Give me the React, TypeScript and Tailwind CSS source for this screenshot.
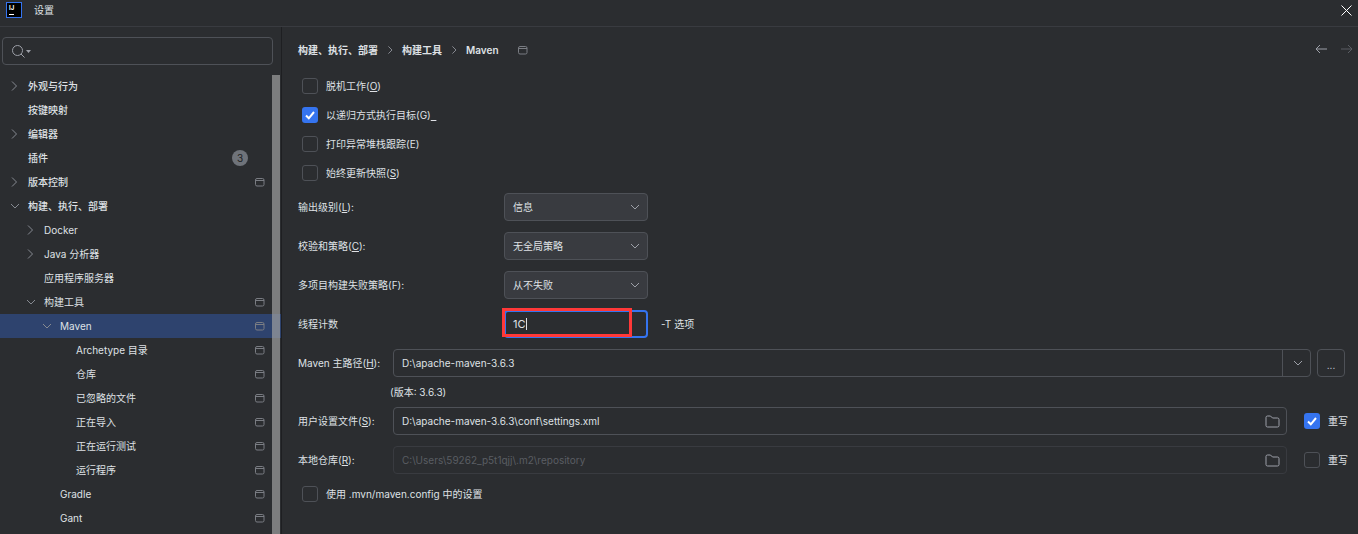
import { ReactNode } from "react";

interface TreeItem {
  label: string;
  level: number;
  arrow?: "right" | "down";
  project?: boolean;
  badge?: string;
  selected?: boolean;
  strong?: boolean;
}

const treeItems: TreeItem[] = [
  { label: "外观与行为", level: 0, arrow: "right", strong: true },
  { label: "按键映射", level: 0, strong: true },
  { label: "编辑器", level: 0, arrow: "right", strong: true },
  { label: "插件", level: 0, badge: "3", strong: true },
  { label: "版本控制", level: 0, arrow: "right", project: true, strong: true },
  { label: "构建、执行、部署", level: 0, arrow: "down", strong: true },
  { label: "Docker", level: 1, arrow: "right" },
  { label: "Java 分析器", level: 1, arrow: "right" },
  { label: "应用程序服务器", level: 1 },
  { label: "构建工具", level: 1, arrow: "down", project: true },
  { label: "Maven", level: 2, arrow: "down", project: true, selected: true },
  { label: "Archetype 目录", level: 3, project: true },
  { label: "仓库", level: 3, project: true },
  { label: "已忽略的文件", level: 3, project: true },
  { label: "正在导入", level: 3, project: true },
  { label: "正在运行测试", level: 3, project: true },
  { label: "运行程序", level: 3, project: true },
  { label: "Gradle", level: 2, project: true },
  { label: "Gant", level: 2, project: true },
];

function Chevron({ dir, className }: { dir: "right" | "down"; className?: string }) {
  return (
    <svg width="10" height="10" viewBox="0 0 10 10" fill="none" stroke="currentColor" strokeWidth="1" className={className}>
      {dir === "right" ? <path d="M3 0.5l4.5 4.5-4.5 4.5" /> : <path d="M2 3l4 4 4-4" />}
    </svg>
  );
}

function ProjectIcon() {
  return (
    <svg width="10" height="9" viewBox="0 0 10 9" fill="none" stroke="#7a7d83" strokeWidth="1">
      <rect x="0.5" y="0.5" width="8.5" height="7.5" rx="1.5" />
      <path d="M0.5 2.5h8.5" />
    </svg>
  );
}

function FolderIcon() {
  return (
    <svg width="15" height="13" viewBox="0 0 15 13" fill="none" stroke="#9da0a8" strokeWidth="1">
      <path d="M1 2.5A1.5 1.5 0 0 1 2.5 1h3l2 2h5A1.5 1.5 0 0 1 14 4.5v6a1.5 1.5 0 0 1-1.5 1.5h-10A1.5 1.5 0 0 1 1 10.5z" />
    </svg>
  );
}

function CheckBox({ checked }: { checked?: boolean }) {
  if (checked) {
    return (
      <span className="w-4 h-4 shrink-0 rounded-[3px] bg-[#3574f0] flex items-center justify-center">
        <svg width="12" height="12" viewBox="0 0 12 12" fill="none" stroke="#ffffff" strokeWidth="2">
          <path d="M2 6.5l2.8 2.8L10 3" />
        </svg>
      </span>
    );
  }
  return <span className="w-4 h-4 shrink-0 rounded-[3px] border border-[#4e5157]" />;
}

function CheckRow({ checked, children }: { checked?: boolean; children: ReactNode }) {
  return (
    <div className="h-[29px] flex items-center gap-2 pl-1">
      <CheckBox checked={checked} />
      <span className="text-[#dfe1e5]">{children}</span>
    </div>
  );
}

function Select({ label, value }: { label: ReactNode; value: string }) {
  return (
    <div className="h-7 flex items-center">
      <span className="w-[206px] text-[#dfe1e5]">{label}</span>
      <div className="w-[144px] h-7 px-2 rounded border border-[#4e5157] bg-[#393b40] flex items-center justify-between text-[#dfe1e5]">
        <span>{value}</span>
        <Chevron dir="down" className="text-[#9da0a8]" />
      </div>
    </div>
  );
}

function PathRow({ label, value, checked, disabled }: { label: ReactNode; value: string; checked?: boolean; disabled?: boolean }) {
  return (
    <div className="h-7 flex items-center">
      <span className="w-[95px] shrink-0 text-[#dfe1e5]">{label}</span>
      <div className={`flex-1 h-7 pl-2 pr-[6px] rounded border flex items-center justify-between ${disabled ? "border-[#393b40] text-[#5a5d63]" : "border-[#4e5157] text-[#dfe1e5]"}`}>
        <span>{value}</span>
        <FolderIcon />
      </div>
      <div className="w-[61px] -mr-[3px] shrink-0 pl-[17px] flex items-center gap-2">
        <CheckBox checked={checked} />
        <span className="text-[#dfe1e5]">重写</span>
      </div>
    </div>
  );
}

export default function App() {
  return (
    <div className="w-[1358px] h-[534px] overflow-hidden bg-[#2b2d30] flex flex-col text-[10px] leading-none font-['Inter','Noto_Sans_CJK_SC',sans-serif]">
      {/* title bar */}
      <div className="h-[27px] shrink-0 border-b border-[#393b40] flex items-center justify-between pl-[6px] pr-[6px] pb-[6px]">
        <div className="flex items-center gap-[12px]">
          <div className="w-4 h-4 bg-black border border-[#3574f0] flex flex-col justify-between px-[2px] py-[1px] text-white text-[6px] font-bold leading-[7px]">
            <span>IJ</span>
            <span className="w-[5px] h-px mb-[1px] bg-white" />
          </div>
          <span className="text-[#dfe1e5]">设置</span>
        </div>
        <svg width="11" height="11" viewBox="0 0 11 11" stroke="#ffffff" strokeWidth="1">
          <path d="M0.5 0.5l10 10M10.5 0.5l-10 10" />
        </svg>
      </div>

      <div className="flex-1 flex min-h-0">
        {/* sidebar */}
        <div className="w-[282px] shrink-0 border-r border-[#1e1f22] relative overflow-hidden">
          <div className="mt-[10px] mx-[2px] w-[271px] h-[28px] rounded border border-[#4e5157] flex items-center pl-[9px] gap-[1px] text-[#9da0a8]">
            <svg width="13" height="13" viewBox="0 0 13 13" fill="none" stroke="currentColor" strokeWidth="1">
              <circle cx="5.5" cy="5.5" r="5" />
              <path d="M9 9l3.5 3.5" />
            </svg>
            <svg width="5" height="3" viewBox="0 0 5 3" fill="currentColor">
              <path d="M0 0h5L2.5 3z" />
            </svg>
          </div>
          <div className="mt-[9px]">
            {treeItems.map((item) => (
              <div key={item.label} className={`h-6 flex items-center pr-[16px] ${item.selected ? "bg-[#2e436e]" : ""}`}>
                <div className="flex items-center flex-1">
                  {item.level > 0 && <span className={item.level === 1 ? "w-4" : item.level === 2 ? "w-8" : "w-12"} />}
                  <span className="w-7 pl-[9px] shrink-0 text-[#868a91]">
                    {item.arrow && <Chevron dir={item.arrow} />}
                  </span>
                  <span className={item.strong ? "text-[#dfe1e5] font-medium" : "text-[#dfe1e5]"}>{item.label}</span>
                </div>
                {item.project && <ProjectIcon />}
                {item.badge && (
                  <span className="w-4 h-4 mr-[17px] rounded-full bg-[#6f737a] text-[#1e1f22] flex items-center justify-center">
                    {item.badge}
                  </span>
                )}
              </div>
            ))}
          </div>
          {/* scrollbar thumb */}
          <div className="absolute left-[272px] top-[48px] bottom-0 w-2 bg-[#a0a0a0]/70" />
        </div>

        {/* content */}
        <div className="flex-1 min-w-0 pl-4 pr-[13px]">
          <div className="h-[44px] flex items-center justify-between">
            <div className="pt-[2px] flex items-center font-semibold text-[#dfe1e5]">
              <span>构建、执行、部署</span>
              <Chevron dir="right" className="mx-[8px] w-2 h-2 text-[#9da0a8]" />
              <span>构建工具</span>
              <Chevron dir="right" className="mx-[8px] w-2 h-2 text-[#9da0a8]" />
              <span>Maven</span>
              <span className="ml-[19px]"><ProjectIcon /></span>
            </div>
            <div className="-mr-2 flex items-center gap-[14px]">
              <svg width="12" height="10" viewBox="0 0 12 10" fill="none" stroke="#9da0a8" strokeWidth="1">
                <path d="M12 5H1M5 1L1 5l4 4" />
              </svg>
              <svg width="12" height="10" viewBox="0 0 12 10" fill="none" stroke="#5a5d63" strokeWidth="1">
                <path d="M0 5h11M7 1l4 4-4 4" />
              </svg>
            </div>
          </div>

          <CheckRow>脱机工作(<span className="underline">O</span>)</CheckRow>
          <CheckRow checked>以递归方式执行目标(G)<span className="underline">&nbsp;&nbsp;</span></CheckRow>
          <CheckRow>打印异常堆栈跟踪(E)</CheckRow>
          <CheckRow>始终更新快照(<span className="underline">S</span>)</CheckRow>

          <div className="mt-[6px] flex flex-col gap-[11px]">
            <Select label={<>输出级别(<span className="underline">L</span>):</>} value="信息" />
            <Select label={<>校验和策略(<span className="underline">C</span>):</>} value="无全局策略" />
            <Select label="多项目构建失败策略(F):" value="从不失败" />
            <div className="h-7 flex items-center">
              <span className="w-[206px] text-[#dfe1e5]">线程计数</span>
              <div className="relative w-[144px] h-7 pl-[7px] rounded border-2 border-[#3574f0] flex items-center text-[#dfe1e5] text-[11px]">
                <span>1C</span>
                <span className="w-px h-3 bg-[#dfe1e5]" />
                <div className="absolute -left-[4px] -top-[4px] w-[130px] h-[29px] border-[3px] border-[#ff3838]" />
              </div>
              <span className="ml-[13px] text-[#dfe1e5]">-T 选项</span>
            </div>
            <div className="h-7 flex items-center">
              <span className="w-[95px] shrink-0 text-[#dfe1e5]">Maven 主路径(<span className="underline">H</span>):</span>
              <div className="flex-1 h-7 pl-2 rounded border border-[#4e5157] flex items-center justify-between text-[#dfe1e5]">
                <span>D:\apache-maven-3.6.3</span>
                <span className="w-[28px] h-full border-l border-[#4e5157] flex items-center justify-center text-[#9da0a8]">
                  <Chevron dir="down" />
                </span>
              </div>
              <div className="ml-[6px] w-7 h-7 pt-[3px] rounded border border-[#4e5157] text-[#c5cadb] flex items-center justify-center">...</div>
            </div>
          </div>

          <div className="h-[30px] pl-[92px] flex items-center text-[#dfe1e5]">(版本: 3.6.3)</div>

          <div className="flex flex-col gap-[11px]">
            <PathRow label={<>用户设置文件(<span className="underline">S</span>):</>} value="D:\apache-maven-3.6.3\conf\settings.xml" checked />
            <PathRow label={<>本地仓库(<span className="underline">R</span>):</>} value="C:\Users\59262_p5t1qjj\.m2\repository" disabled />
          </div>

          <div className="mt-[5px]">
            <CheckRow>使用 .mvn/maven.config 中的设置</CheckRow>
          </div>
        </div>
      </div>
    </div>
  );
}
